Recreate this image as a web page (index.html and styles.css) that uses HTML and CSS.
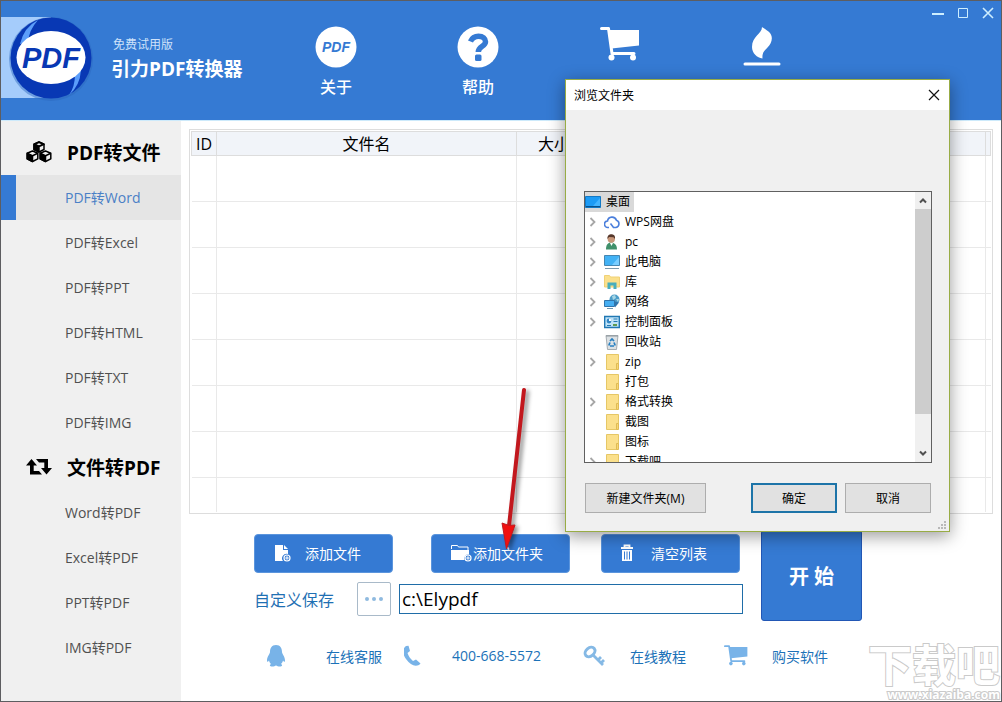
FILE: index.html
```html
<!DOCTYPE html>
<html lang="zh-CN">
<head>
<meta charset="utf-8">
<title>引力PDF转换器</title>
<link rel="stylesheet" href="styles.css">
</head>
<body>
<svg class="defs" width="0" height="0" aria-hidden="true">
  <symbol id="cart" viewBox="0 0 40 34">
    <path d="M1.500 1.500h7l3.500 25h22" fill="none" stroke="currentColor" stroke-width="3" stroke-linecap="round" stroke-linejoin="round"/>
    <path d="M8.500 3H39v15.500L11.500 21.500z" fill="currentColor"/>
    <circle cx="11.500" cy="30.500" r="3" fill="currentColor"/><circle cx="33" cy="30.500" r="3" fill="currentColor"/>
  </symbol>
  <symbol id="folder" viewBox="0 0 16 16">
    <path d="M2.500.5h12v9h-1v6h-11z" fill="#fbe08c" stroke="#e6c766"/>
    <path d="M12.500 9.500h2v6h-2z" fill="#f8d775" stroke="#dfbb55"/>
  </symbol>
  <symbol id="chev" viewBox="0 0 8 10">
    <path d="M1.500 1l4 4-4 4" fill="none" stroke="#a6a6a6" stroke-width="1.800"/>
  </symbol>
</svg>
<div class="app">
  <header class="header">
    <div class="brand">
      <svg class="logo" width="96" height="90" viewBox="0 0 96 90">
        <path d="M0 4h50v81H0z" fill="#a5ccfb"/>
        <circle cx="50" cy="46" r="42" fill="#2b66bd" opacity=".45"/>
        <circle cx="50" cy="45" r="40.500" fill="#0838b4"/>
        <path d="M19 31Q23 14 37 7Q28 17 27 29zM80 57Q79 73 68 82Q74 74 74 61z" fill="#5b9dfa"/>
        <ellipse cx="50" cy="44.500" rx="34.500" ry="26.500" fill="#fff"/>
        <text x="50" y="55" class="logo-word">PDF</text>
      </svg>
      <div class="brand-text">
        <span class="edition">免费试用版</span>
        <h1 class="title">引力PDF转换器</h1>
      </div>
    </div>
    <nav class="topnav">
      <button class="top-item" type="button">
        <svg width="42" height="42" viewBox="0 0 42 42"><circle cx="21" cy="21" r="20.500" fill="#fff"/><text x="21" y="26" class="about-word">PDF</text></svg>
        <span>关于</span>
      </button>
      <button class="top-item" type="button">
        <svg width="42" height="42" viewBox="0 0 42 42"><circle cx="21" cy="21" r="20.500" fill="#fff"/><path d="M13.500 15.500C15.500 11 18 10.300 21.500 10.300C26 10.300 28.500 12.500 28.500 15.800C28.500 20.500 21.300 20 21.300 26" fill="none" stroke="#357ad3" stroke-width="5.500"/><rect x="18" y="28.500" width="6.500" height="6.500" rx="1.500" fill="#357ad3"/></svg>
        <span>帮助</span>
      </button>
      <button class="top-item" type="button" aria-label="购买">
        <svg width="40" height="42" viewBox="0 0 40 42"><use href="#cart" width="40" height="34" y="1"/></svg>
      </button>
      <button class="top-item" type="button" aria-label="升级">
        <svg width="38" height="42" viewBox="0 0 38 42"><path d="M19 1C19 8 9 10 9 21C9 27 14 32 19.500 32.500C19 27 21 25 24.500 21.500C29 17 31 10 25.500 5.500C23 3.500 21 2.500 19 1z" fill="#fff"/><path d="M2 38h34" stroke="#fff" stroke-width="3" stroke-linecap="round"/></svg>
      </button>
    </nav>
    <div class="winctl">
      <button type="button" aria-label="最小化"><svg width="12" height="12"><path d="M0 7h12" stroke="#cdeeff" stroke-width="2"/></svg></button>
      <button type="button" aria-label="最大化"><svg width="12" height="12"><path d="M1.500 1.500h9v9h-9z" fill="none" stroke="#cdeeff"/></svg></button>
      <button type="button" aria-label="关闭"><svg width="12" height="12"><path d="M1 1l10 10M11 1L1 11" stroke="#cdeeff" stroke-width="1.600"/></svg></button>
    </div>
  </header>

  <div class="body">
    <aside class="sidebar">
      <h2 class="group">
        <svg width="26" height="22" viewBox="0 0 26 22"><g stroke="#000" stroke-width="1.500" stroke-linejoin="round"><path d="M13 1l5 2.200v5.300L13 11 8 8.500V3.200z" fill="#f0f0f0"/><path d="M8 3.200l5 2.300V11L8 8.500zM8 3.200L13 1l5 2.200-5 2.300z"/><path d="M6.500 10l5.300 2.300v5.500l-5.300 2.700-5.300-2.700v-5.500z" fill="#f0f0f0"/><path d="M1.200 12.300l5.300 2.400v5.800l-5.300-2.700z"/><path d="M6.500 14.700l5.300-2.400M19.500 10l5.300 2.300v5.500l-5.300 2.700-5.300-2.700v-5.500z" fill="#f0f0f0"/><path d="M14.200 12.300l5.300 2.400v5.800l-5.300-2.700z"/><path d="M19.500 14.700l5.300-2.400"/></g><path d="M10.500 3.200L13 2.200l2.500 1L13 4.300zM4 12.300l2.500-1 2.500 1-2.500 1.100zM17 12.300l2.500-1 2.500 1-2.500 1.100z" fill="#f0f0f0"/></svg>
        <span>PDF转文件</span>
      </h2>
      <a class="item item-on" href="#">PDF转Word</a>
      <a class="item" href="#">PDF转Excel</a>
      <a class="item" href="#">PDF转PPT</a>
      <a class="item" href="#">PDF转HTML</a>
      <a class="item" href="#">PDF转TXT</a>
      <a class="item" href="#">PDF转IMG</a>
      <h2 class="group">
        <svg width="26" height="22" viewBox="0 0 26 22"><path d="M5.500 3L11 9.500H7.700V15H13l3 3.500H4V9.500H0zM20.500 18.500L15 12h3.300V6.500H13L10 3h12v9h4z"/></svg>
        <span>文件转PDF</span>
      </h2>
      <a class="item" href="#">Word转PDF</a>
      <a class="item" href="#">Excel转PDF</a>
      <a class="item" href="#">PPT转PDF</a>
      <a class="item" href="#">IMG转PDF</a>
    </aside>

    <main class="main">
      <div class="list">
        <table class="files">
          <colgroup><col class="c-id"><col class="c-name"><col class="c-size"><col><col class="c-end"></colgroup>
          <thead><tr><th>ID</th><th>文件名</th><th>大小</th><th></th><th></th></tr></thead>
          <tbody>
            <tr><td></td><td></td><td></td><td></td><td></td></tr>
            <tr><td></td><td></td><td></td><td></td><td></td></tr>
            <tr><td></td><td></td><td></td><td></td><td></td></tr>
            <tr><td></td><td></td><td></td><td></td><td></td></tr>
            <tr><td></td><td></td><td></td><td></td><td></td></tr>
            <tr><td></td><td></td><td></td><td></td><td></td></tr>
            <tr><td></td><td></td><td></td><td></td><td></td></tr>
            <tr class="last"><td></td><td></td><td></td><td></td><td></td></tr>
          </tbody>
        </table>
      </div>

      <div class="actions">
        <div class="controls">
          <div class="buttons">
            <div class="adders">
              <button class="btn" type="button">
                <svg width="20" height="18" viewBox="0 0 20 18"><path d="M2 1h8v5h5v4a4.500 4.500 0 0 0-5 7H2zM11 1l4 4h-4z" fill="#fff"/><circle cx="14" cy="14" r="3" fill="none" stroke="#fff" stroke-width="1.200"/><path d="M14 12.200v3.600M12.200 14h3.600" stroke="#fff"/></svg>
                <span>添加文件</span>
              </button>
              <button class="btn btn-tight" type="button">
                <svg width="22" height="18" viewBox="0 0 22 18"><path d="M1.500 5V1.500h6l1 1.500H18v3" fill="none" stroke="#fff"/><path d="M1 6h18v4.500a4 4 0 0 0-4.500 5.500H1z" fill="#fff"/><circle cx="18" cy="14" r="3" fill="none" stroke="#fff" stroke-width="1.200"/><path d="M18 12.200v3.600M16.200 14h3.600" stroke="#fff"/></svg>
                <span>添加文件夹</span>
              </button>
            </div>
            <button class="btn btn-wide" type="button">
              <svg width="14" height="18" viewBox="0 0 14 18"><path d="M1 4h12M4.500 3.500V1.500h5v2" fill="none" stroke="#fff" stroke-width="1.800"/><path d="M2 6h10v11H2z" fill="#fff"/><path d="M4.500 7.500v8M7 7.500v8M9.500 7.500v8" stroke="#357ad3"/></svg>
              <span>清空列表</span>
            </button>
          </div>
          <div class="save">
            <label class="save-label" for="path">自定义保存</label>
            <button class="browse" type="button" aria-label="浏览"><svg width="20" height="6"><g fill="#8fbadf"><circle cx="3" cy="3" r="2"/><circle cx="10" cy="3" r="2"/><circle cx="17" cy="3" r="2"/></g></svg></button>
            <input class="path" id="path" type="text" value="c:\Elypdf">
          </div>
        </div>
        <button class="start" type="button">开 始</button>
      </div>

      <div class="links">
        <a class="link link-far" href="#"><svg width="24" height="22" viewBox="0 0 24 22"><path d="M10 0C5.500 0 4 3.500 4 7C4 9 1 11.500 1 15.500C1 17.500 2 17 3 15.500C3.300 17 4 18 5 19C3 20 4 21.500 6 21.500C8 21.500 9 21 10 20.500C11 21 12 21.500 14 21.500C16 21.500 17 20 15 19C16 18 16.700 17 17 15.500C18 17 19 17.500 19 15.500C19 11.500 16 9 16 7C16 3.500 14.500 0 10 0z" fill="#78b3e8"/></svg><span>在线客服</span></a>
        <a class="link" href="#"><svg width="24" height="22" viewBox="0 0 24 22"><path d="M2 1C-1 3-2.500 8 2 14C6.500 20 10.500 22 15 20L16.500 18.500L12 14.500L9 16C6.500 14 4.500 11 3.500 8L6 6L4.500.8z" fill="#78b3e8"/></svg><span>400-668-5572</span></a>
        <a class="link" href="#"><svg width="24" height="22" viewBox="0 0 24 22"><ellipse cx="8" cy="7" rx="5.500" ry="4" transform="rotate(-40 8 7)" fill="none" stroke="#85b9e5" stroke-width="3"/><path d="M11 10l10 10M16 15l3-3M19 18l3-3" stroke="#85b9e5" stroke-width="2.800" fill="none"/></svg><span>在线教程</span></a>
        <a class="link" href="#"><svg class="pale" width="24" height="22"><use href="#cart" width="24" height="21"/></svg><span>购买软件</span></a>
      </div>
    </main>
  </div>

  <div class="mark" aria-hidden="true"><span class="mark-name">下载吧</span><span class="mark-url">www.xiazaiba.com</span></div>

  <section class="dialog" role="dialog" aria-labelledby="dlg-title">
    <div class="dlg-bar">
      <h2 class="dlg-title" id="dlg-title">浏览文件夹</h2>
      <button class="dlg-close" type="button" aria-label="关闭"><svg width="12" height="12"><path d="M1 1l10 10M11 1L1 11" stroke="#111" stroke-width="1.200"/></svg></button>
    </div>
    <div class="tree">
      <ul class="nodes">
        <li class="node root"><svg width="16" height="16"><path d="M.5 2.500h15v11H.5z" fill="#1c9bf5" stroke="#1379c5"/><path d="M1 12.500h14" stroke="#08518c"/><path d="M8 12L15 4v8z" fill="#42b4ff"/></svg><span>桌面</span></li>
        <li class="node"><svg class="exp" width="8" height="10"><use href="#chev"/></svg><svg width="16" height="16"><path d="M5 13.500H4A3.200 3.200 0 0 1 3.500 7A4.600 4.600 0 0 1 12.400 6.200A3.800 3.800 0 0 1 12 13.500H9.500L6.500 9.500" fill="none" stroke="#4b7fdc" stroke-width="1.600"/></svg><span>WPS网盘</span></li>
        <li class="node"><svg class="exp" width="8" height="10"><use href="#chev"/></svg><svg width="16" height="16"><path d="M2 15.500c0-5 2-7 5-7s6 2 6 7z" fill="#40906b"/><path d="M6 9l1.500 3L9 9z" fill="#fff"/><circle cx="7.300" cy="5" r="3.700" fill="#c8977a"/><path d="M3.500 5C3 1 6 0 8 .3S11.500 2 11 5L9.500 3.200 5 3z" fill="#55372b"/></svg><span>pc</span></li>
        <li class="node"><svg class="exp" width="8" height="10"><use href="#chev"/></svg><svg width="16" height="16"><path d="M.5 1.500h15v10H.5z" fill="#42b2f5" stroke="#4686b1"/><path d="M8 11l7-8v8z" fill="#79cdff"/><path d="M1 14.500h14" fill="none" stroke="#7a99ad"/></svg><span>此电脑</span></li>
        <li class="node"><svg class="exp" width="8" height="10"><use href="#chev"/></svg><svg width="16" height="16"><path d="M.5 13V1.500h5l1 1.500h9v10z" fill="#fbe08c" stroke="#f0d176"/><path d="M3.500 15V8.500h9V15h-3v-3.500h-3V15z" fill="#49aebc"/></svg><span>库</span></li>
        <li class="node"><svg class="exp" width="8" height="10"><use href="#chev"/></svg><svg width="16" height="16"><circle cx="10.500" cy="5.500" r="5" fill="#4c9dc9"/><path d="M8 2l3-1 1 3-3 2zM12 5l3 0-1 3z" fill="#a7d6e4"/><path d="M.5 6.500h10v6H.5z" fill="#45aef2" stroke="#3174aa"/><path d="M11 7.500l4 1-4 5z" fill="#2e74ad"/><path d="M3 14.500h6" stroke="#6c95ae"/></svg><span>网络</span></li>
        <li class="node"><svg class="exp" width="8" height="10"><use href="#chev"/></svg><svg width="16" height="16"><path d="M.7 2.500h14.600v11H.7z" fill="#bfe3f8" stroke="#2178b3" stroke-width="1.400"/><circle cx="5" cy="7" r="2.400" fill="#3186c5"/><path d="M5 7V4.600A2.400 2.400 0 0 1 7.400 7z" fill="#fff"/><path d="M9.500 5h4M9.500 7.500h4M3 11.500h4" stroke="#2178b3"/><path d="M9 10h4v2H9z" fill="#5f9b50"/></svg><span>控制面板</span></li>
        <li class="node"><span class="exp"></span><svg width="16" height="16"><path d="M2 1.500h12l-1.500 14h-9z" fill="#dce1e4" stroke="#a5acb0"/><path d="M2 2h12" stroke="#8e989e"/><path d="M6 7l2-2 2 2M4.800 11.500L6 8.500M11.200 11.500L10 8.500M6 12h4" fill="none" stroke="#267fc1" stroke-width="1.700"/></svg><span>回收站</span></li>
        <li class="node"><svg class="exp" width="8" height="10"><use href="#chev"/></svg><svg width="16" height="16"><use href="#folder"/></svg><span>zip</span></li>
        <li class="node"><span class="exp"></span><svg width="16" height="16"><use href="#folder"/></svg><span>打包</span></li>
        <li class="node"><svg class="exp" width="8" height="10"><use href="#chev"/></svg><svg width="16" height="16"><use href="#folder"/></svg><span>格式转换</span></li>
        <li class="node"><span class="exp"></span><svg width="16" height="16"><use href="#folder"/></svg><span>截图</span></li>
        <li class="node"><span class="exp"></span><svg width="16" height="16"><use href="#folder"/></svg><span>图标</span></li>
        <li class="node"><svg class="exp" width="8" height="10"><use href="#chev"/></svg><svg width="16" height="16"><use href="#folder"/></svg><span>下载吧</span></li>
      </ul>
      <div class="scroll">
        <svg width="16" height="17"><path d="M5 10.500l3-3 3 3" fill="none" stroke="#505050" stroke-width="2"/></svg>
        <div class="thumb"></div>
        <svg width="16" height="17"><path d="M5 6.500l3 3 3-3" fill="none" stroke="#505050" stroke-width="2"/></svg>
      </div>
    </div>
    <div class="dlg-foot">
      <button class="dbtn dbtn-new" type="button">新建文件夹(M)</button>
      <button class="dbtn dbtn-ok" type="button">确定</button>
      <button class="dbtn" type="button">取消</button>
    </div>
    <svg class="grip" width="9" height="9"><path d="M6 0h2v2H6zM3 3h2v2H3zM6 3h2v2H6zM0 6h2v2H0zM3 6h2v2H3zM6 6h2v2H6z" fill="#b8b8b8"/></svg>
  </section>

  <svg class="arrow" width="40" height="170" viewBox="0 0 40 170"><path d="M29 10L14 146" stroke="#c2181e" stroke-width="4" stroke-linecap="round"/><path d="M7 143L14 145.500 20 145 11.500 169z" fill="#f01010" stroke="#c2181e"/></svg>
</div>
</body>
</html>
```
FILE: styles.css
```css
* { box-sizing: border-box; }

body {
  margin: 0;
  font-family: "Open Sans", "Noto Sans CJK SC", sans-serif;
  font-size: 14px;
  color: #000;
}

button, input { font: inherit; }
button { padding: 0; border: 0; background: none; color: inherit; }
a { text-decoration: none; color: inherit; }
h1, h2, ul { margin: 0; padding: 0; }
svg { display: block; flex: none; }
.defs { position: absolute; }

.app {
  position: relative;
  display: flex;
  flex-direction: column;
  min-height: 100vh;
  border: 1px solid #5d5d60;
  background: #fff;
  overflow: hidden;
}

/* Header */
.header {
  display: flex;
  height: 120px;
  background: #357ad3;
  border-bottom: 1px solid #cdeafb;
  color: #fff;
}
.brand { display: flex; align-items: flex-start; width: 264px; padding-top: 12px; gap: 14px; }
.logo-word { font: italic bold 29px "Liberation Sans", sans-serif; fill: #0838b4; text-anchor: middle; }
.about-word { font: italic bold 14px "Liberation Sans", sans-serif; fill: #357ad3; text-anchor: middle; }
.brand-text { display: flex; flex-direction: column; padding-top: 23px; white-space: nowrap; }
.edition { padding-left: 2px; font-size: 12px; line-height: 18px; color: #cfe2fa; }
.title { font-size: 19px; line-height: 30px; }
.topnav { display: flex; flex: 1; }
.top-item {
  display: flex;
  flex-direction: column;
  align-items: center;
  width: 142px;
  padding-top: 25px;
  gap: 7px;
  font-size: 16px;
  font-weight: 500;
  line-height: 24px;
}
.winctl { display: flex; align-items: flex-start; gap: 13px; padding: 6px 7px 0 0; }

/* Sidebar */
.body { display: flex; flex: 1; }
.sidebar { width: 180px; padding: 9px 0 24px; background: #f0f0f0; }
.group {
  display: flex;
  align-items: center;
  gap: 15px;
  height: 45px;
  padding: 0 0 2px 25px;
  font-size: 19px;
  white-space: nowrap;
}
.item {
  display: flex;
  align-items: center;
  height: 45px;
  padding: 0 0 2px 49px;
  border-left: 15px solid transparent;
  color: #505050;
}
.item-on { border-left-color: #357ad3; background: #e5e5e5; color: #4a80c6; }

/* File list */
.main { flex: 1; min-width: 0; padding: 8px; }
.list { padding: 1px; border: 1px solid #ddd; }
.files { width: 100%; table-layout: fixed; border-collapse: collapse; }
.c-id { width: 25px; }
.c-name { width: 300px; }
.c-size { width: 75px; }
.c-end { width: 5px; }
.files th {
  height: 24px;
  padding: 0;
  border: 1px solid #ddd;
  background: #f1f4f9;
  font-size: 16px;
  font-weight: 400;
  line-height: 22px;
}
.files td { height: 46px; padding: 0; border: 1px solid #e9e9e9; border-left-width: 0; }
.files td:last-child { border-right: 0; }
.files .last td { height: 34px; border-bottom: 0; }

/* Actions */
.actions { display: flex; gap: 18px; padding: 16px 0 0 65px; }
.controls { display: flex; flex-direction: column; gap: 9px; padding-top: 4px; width: 489px; }
.buttons { display: flex; gap: 31px; }
.adders { display: flex; gap: 38px; }
.btn {
  display: flex;
  align-items: center;
  gap: 12px;
  width: 139px;
  height: 39px;
  padding-left: 18px;
  border: 1px solid #5b95dd;
  border-radius: 4px;
  background: #357ad3;
  color: #fff;
}
.btn-tight { gap: 1px; }
.btn-wide { gap: 17px; }
.save { display: flex; align-items: center; }
.save-label { width: 103px; font-size: 16px; color: #1f70b3; }
.browse {
  display: flex;
  align-items: center;
  justify-content: center;
  width: 34px;
  height: 34px;
  margin-right: 8px;
  border: 1px solid #a9bac9;
  border-radius: 2px;
}
.path {
  flex: 1;
  min-width: 0;
  height: 30px;
  padding: 0 2px;
  border: 1px solid #1f6da8;
  font-size: 19px;
}
.start {
  width: 101px;
  height: 91px;
  border: 1px solid #2257b5;
  border-radius: 3px;
  background: #357ad3;
  color: #fff;
  font-size: 20px;
  font-weight: 700;
}
.links { display: grid; grid-template-columns: 138px 178px 142px 120px; padding: 24px 0 0 77px; }
.link { display: flex; align-items: center; gap: 24px; color: #1c72b8; white-space: nowrap; }
.link-far { gap: 36px; }
.pale { color: #78b3e8; }

/* Watermark */
.mark {
  position: absolute;
  right: 1px;
  bottom: 0;
  display: flex;
  flex-direction: column;
  align-items: flex-end;
  color: #fff;
  font-weight: 700;
  -webkit-text-stroke: 2px #cacaca;
  paint-order: stroke fill;
}
.mark-name { font-size: 44px; line-height: 48px; }
.mark-url { font-size: 12px; line-height: 12px; }

/* Folder dialog */
.dialog {
  position: absolute;
  top: 78px;
  right: 51px;
  display: flex;
  flex-direction: column;
  width: 385px;
  height: 453px;
  border: 1px solid #98ac45;
  background: #f0f0f0;
  box-shadow: 0 4px 16px rgba(0, 0, 0, .4);
  font-size: 12px;
}
.dlg-bar {
  display: flex;
  align-items: center;
  justify-content: space-between;
  height: 30px;
  padding: 0 9px 0 8px;
  background: #fff;
}
.dlg-title { font-size: 12px; font-weight: 400; }
.tree {
  display: flex;
  height: 272px;
  margin: 81px 17px 0 18px;
  border: 1px solid #606060;
  background: #fff;
  overflow: hidden;
}
.nodes { flex: 1; list-style: none; }
.node { display: flex; align-items: center; gap: 5px; height: 20px; padding-left: 4px; line-height: 20px; }
.node .exp { width: 8px; margin-right: 2px; }
.root { width: 49px; padding-left: 0; background: #d9d9d9; }
.scroll { display: flex; flex-direction: column; width: 16px; background: #f0f0f0; }
.thumb { height: 205px; background: #cdcdcd; }
.scroll svg:last-child { margin-top: auto; }
.dlg-foot { display: flex; gap: 8px; padding: 20px 18px 0 19px; }
.dbtn { width: 86px; height: 30px; border: 1px solid #adadad; background: #e1e1e1; }
.dbtn-new { width: 121px; margin-right: auto; }
.dbtn-ok { border: 2px solid #1d74a8; }
.grip { position: absolute; right: 2px; bottom: 1px; }

/* Pointer to the add-folder button */
.arrow {
  position: absolute;
  left: 494px;
  top: 379px;
  filter: drop-shadow(3px 2px 2px rgba(0, 0, 0, .45));
}
```
